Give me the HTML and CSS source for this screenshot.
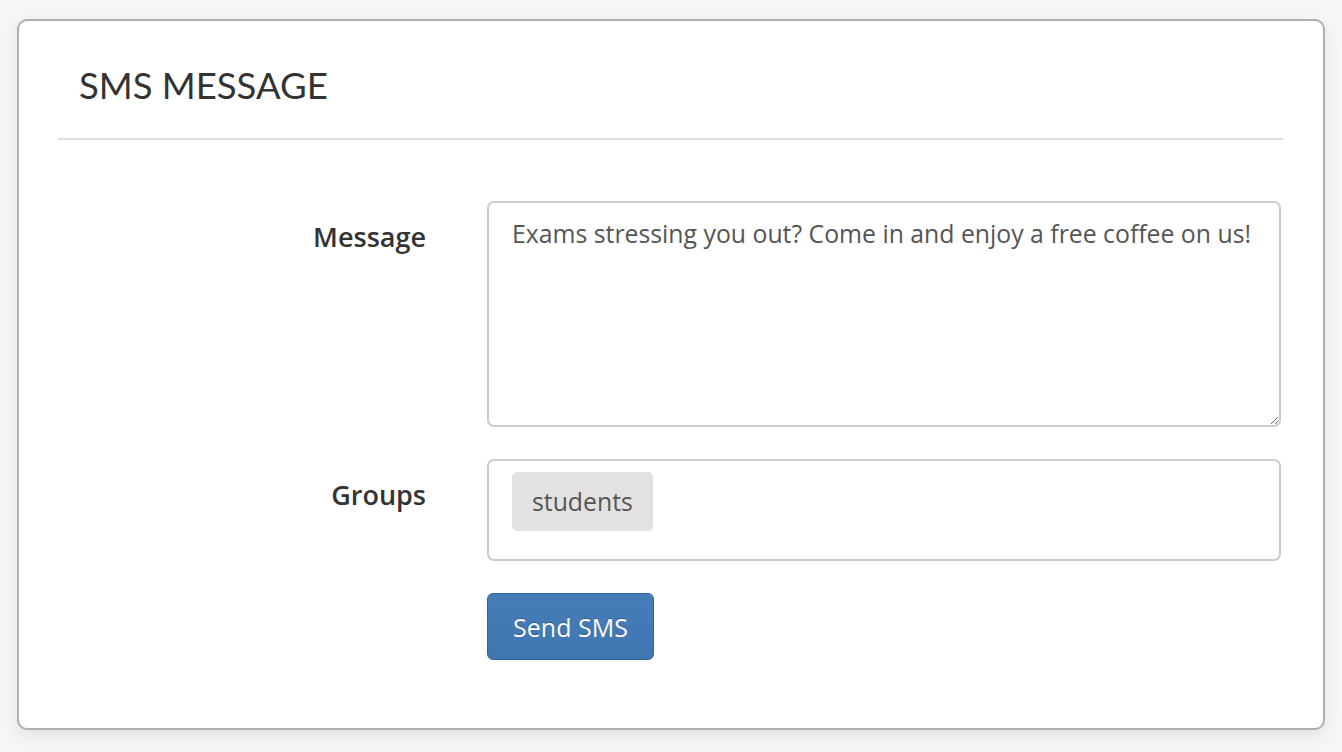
FILE: index.html
```html
<!DOCTYPE html>
<html>
<head>
<meta charset="utf-8">
<link rel="stylesheet" href="styles.css">
</head>
<body>
<div class="panel">
  <div class="panel-head">
    <h2 class="title">SMS MESSAGE</h2>
  </div>
  <form class="form">
    <div class="row">
      <label class="label">Message</label>
      <div class="field">
        <textarea class="textarea">Exams stressing you out? Come in and enjoy a free coffee on us!</textarea>
      </div>
    </div>
    <div class="row">
      <label class="label">Groups</label>
      <div class="field">
        <div class="tagbox"><span class="tag">students</span></div>
      </div>
    </div>
    <div class="row">
      <div class="label"></div>
      <div class="field">
        <button type="button" class="btn">Send SMS</button>
      </div>
    </div>
  </form>
</div>
</body>
</html>
```

FILE: styles.css
```css
html, body {
  margin: 0;
  padding: 0;
}
body {
  background: #f6f6f6;
  font-family: "Open Sans", Lato, sans-serif;
  width: 1342px;
  height: 752px;
  overflow: hidden;
}
.panel {
  box-sizing: border-box;
  margin: 19px 0 0 17px;
  width: 1308px;
  height: 711px;
  background: #fff;
  border: 2px solid #aab1af;
  border-radius: 10px;
  box-shadow: 0 6px 16px rgba(0, 0, 0, 0.08);
  padding: 0 40px 0 39px;
}
.panel-head {
  border-bottom: 2px solid #dddddd;
  padding: 43px 0 0 21px;
  height: 74px;
}
.title {
  margin: 0;
  font-family: Lato, sans-serif;
  font-weight: 400;
  font-size: 36.5px;
  line-height: 43px;
  color: #333;
}
.form {
  padding-top: 61px;
}
.row {
  display: flex;
  margin-bottom: 32px;
}
.label {
  width: 368px;
  flex: none;
  text-align: right;
  font-weight: 600;
  font-size: 27px;
  color: #333;
  padding-top: 17px;
  line-height: 38px;
  margin-right: 61px;
}
.field {
  flex: 1;
}
.textarea {
  display: block;
  box-sizing: border-box;
  width: 794px;
  height: 226px;
  border: 2px solid #cccccc;
  border-radius: 7px;
  padding: 13px 23px;
  font-family: "Open Sans", sans-serif;
  font-size: 24.8px;
  line-height: 34px;
  color: #555;
  resize: vertical;
  margin: 0;
}
.tagbox {
  box-sizing: border-box;
  width: 794px;
  height: 102px;
  border: 2px solid #cccccc;
  border-radius: 7px;
  padding: 11px 23px;
}
.tag {
  display: inline-block;
  background: #e3e2e0;
  border-radius: 5px;
  height: 59px;
  line-height: 59px;
  padding: 0 20px;
  font-size: 24.8px;
  color: #555;
}
.btn {
  box-sizing: border-box;
  width: 167px;
  height: 67px;
  border: 1px solid #2f6399;
  border-radius: 6px;
  background: linear-gradient(#467db8, #4076b0);
  color: #fff;
  font-family: "Open Sans", sans-serif;
  font-size: 25px;
  text-shadow: 0 -1px 0 rgba(0, 0, 0, 0.25);
  padding: 0;
  cursor: pointer;
}
```
